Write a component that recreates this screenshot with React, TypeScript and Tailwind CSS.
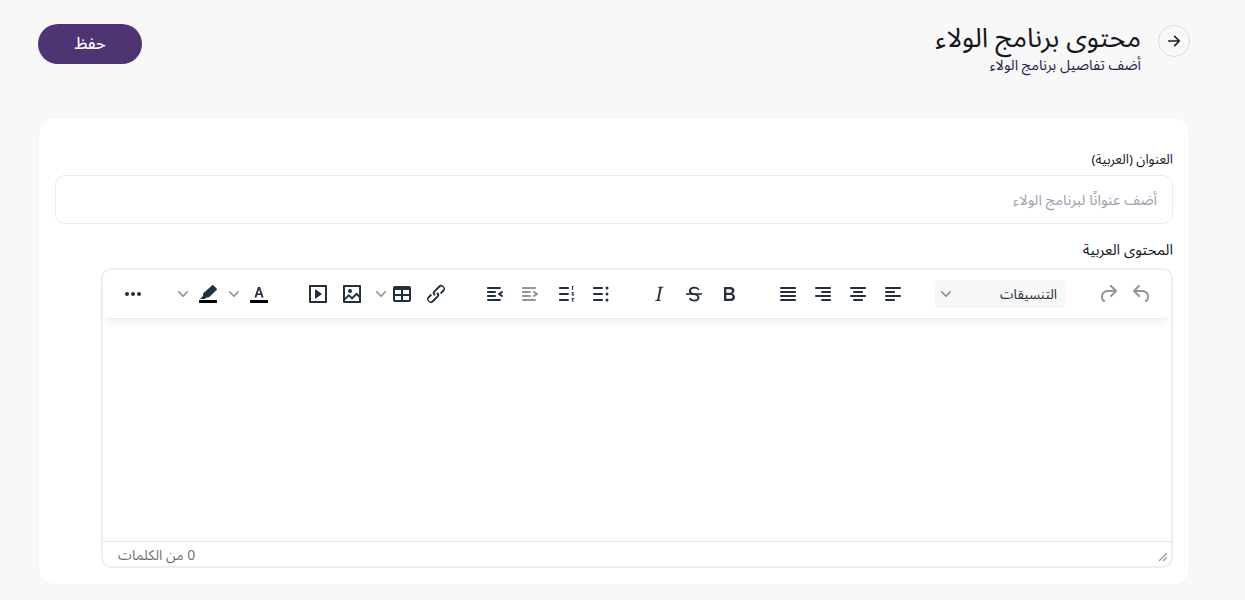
import React from "react";

const font = "font-['Noto_Sans_Arabic','DejaVu_Sans','Noto_Sans',sans-serif]";

function Ic({ d, className = "fill-[#222f3e]", flip = false, children }: { d?: string; className?: string; flip?: boolean; children?: React.ReactNode }) {
  return (
    <svg width="24" height="24" viewBox="0 0 24 24" className={className} fillRule="evenodd">
      <g transform={flip ? "translate(24 0) scale(-1 1)" : undefined}>
        {d && <path d={d} />}
        {children}
      </g>
    </svg>
  );
}

function Btn({ children }: { children: React.ReactNode }) {
  return <div className="w-[34px] h-[34px] flex items-center justify-center shrink-0">{children}</div>;
}

function Chev({ className = "" }: { className?: string }) {
  return (
    <div className={"w-[16px] h-[34px] flex items-center justify-center shrink-0 " + className}>
      <svg width="10" height="10" viewBox="0 0 10 10" className="fill-[#222f3e] opacity-50">
        <path d="M8.7 2.2c.3-.3.8-.3 1 0 .4.4.4.9 0 1.2L5.7 7.8c-.3.3-.9.3-1.2 0L.2 3.4a.8.8 0 0 1 0-1.2c.3-.3.8-.3 1.1 0L5 6l3.7-3.8Z" />
      </svg>
    </div>
  );
}

const P = {
  undo: "M6.4 8H12c3.7 0 6.2 2 6.8 5.1.6 2.7-.4 5.6-2.3 6.8a1 1 0 0 1-1-1.8c1.1-.6 1.8-2.7 1.4-4.6-.5-2.1-2.1-3.5-4.9-3.5H6.4l3.3 3.3a1 1 0 1 1-1.4 1.4l-5-5a1 1 0 0 1 0-1.4l5-5a1 1 0 0 1 1.4 1.4L6.4 8Z",
  redo: "M17.6 10H12c-2.8 0-4.4 1.4-4.9 3.5-.4 2 .3 4 1.4 4.6a1 1 0 1 1-1 1.8c-2-1.2-2.9-4.1-2.3-6.8.6-3 3-5.1 6.8-5.1h5.6l-3.3-3.3a1 1 0 1 1 1.4-1.4l5 5a1 1 0 0 1 0 1.4l-5 5a1 1 0 0 1-1.4-1.4l3.3-3.3Z",
  alignLeft: "M5 5h14c.6 0 1 .4 1 1s-.4 1-1 1H5a1 1 0 1 1 0-2Zm0 4h8c.6 0 1 .4 1 1s-.4 1-1 1H5a1 1 0 1 1 0-2Zm0 8h8c.6 0 1 .4 1 1s-.4 1-1 1H5a1 1 0 0 1 0-2Zm0-4h14c.6 0 1 .4 1 1s-.4 1-1 1H5a1 1 0 0 1 0-2Z",
  alignCenter: "M5 5h14c.6 0 1 .4 1 1s-.4 1-1 1H5a1 1 0 1 1 0-2Zm3 4h8c.6 0 1 .4 1 1s-.4 1-1 1H8a1 1 0 1 1 0-2Zm0 8h8c.6 0 1 .4 1 1s-.4 1-1 1H8a1 1 0 0 1 0-2Zm-3-4h14c.6 0 1 .4 1 1s-.4 1-1 1H5a1 1 0 0 1 0-2Z",
  alignRight: "M5 5h14c.6 0 1 .4 1 1s-.4 1-1 1H5a1 1 0 1 1 0-2Zm6 4h8c.6 0 1 .4 1 1s-.4 1-1 1h-8a1 1 0 0 1 0-2Zm0 8h8c.6 0 1 .4 1 1s-.4 1-1 1h-8a1 1 0 0 1 0-2Zm-6-4h14c.6 0 1 .4 1 1s-.4 1-1 1H5a1 1 0 0 1 0-2Z",
  justify: "M5 5h14c.6 0 1 .4 1 1s-.4 1-1 1H5a1 1 0 1 1 0-2Zm0 4h14c.6 0 1 .4 1 1s-.4 1-1 1H5a1 1 0 1 1 0-2Zm0 4h14c.6 0 1 .4 1 1s-.4 1-1 1H5a1 1 0 0 1 0-2Zm0 4h14c.6 0 1 .4 1 1s-.4 1-1 1H5a1 1 0 0 1 0-2Z",
  bold: "M7.8 19c-.3 0-.5 0-.6-.2l-.2-.5V5.7c0-.2 0-.4.2-.5l.6-.2h5c1.5 0 2.7.3 3.5 1 .7.6 1.1 1.4 1.1 2.5a3 3 0 0 1-.6 1.9c-.4.6-1 1-1.6 1.2.4.1.9.3 1.3.6s.8.7 1 1.2c.4.4.5 1 .5 1.6 0 1.3-.4 2.3-1.3 3-.8.7-2.1 1-3.8 1H7.8Zm5-8.3c.6 0 1.2-.1 1.6-.5.4-.3.6-.7.6-1.3 0-1.1-.8-1.7-2.3-1.7H9.3v3.5h3.4Zm.5 6c.7 0 1.3-.1 1.7-.4.4-.4.6-.9.6-1.5s-.2-1-.7-1.4c-.4-.3-1-.4-2-.4H9.4v3.8h4Z",
  italic: "m16.7 4.7-.1.9h-.3c-.6 0-1 0-1.4.3-.3.3-.4.6-.5 1.1l-2.1 9.8v.6c0 .5.4.8 1.4.8h.2l-.2.8H8l.2-.8h.2c1.1 0 1.8-.5 2-1.5l2-9.8.1-.5c0-.6-.4-.8-1.4-.8h-.3l.2-.9h5.8Z",
  strikeS: "M16.4 8.6c-.3-.5-.7-1-1.2-1.3-.8-.6-1.7-.9-2.9-.9-2.2 0-3.4 1-3.4 2.4 0 1.7 1.7 2.2 3.6 2.6 2.9.6 5 1.6 5 4.2 0 2.5-2.2 4-5.3 4-2.4 0-4.3-1-5.4-2.8l1.6-1c.8 1.3 2.1 2 3.8 2 2 0 3.3-.8 3.3-2.2 0-1.6-1.7-2.1-3.7-2.5-2.7-.6-4.9-1.5-4.9-4.2 0-2.4 2.1-4.2 5.3-4.2 2.6 0 4.3 1.1 5.4 2.9l-1.7 1Z",
  bullets: "M11 5h8c.6 0 1 .4 1 1s-.4 1-1 1h-8a1 1 0 0 1 0-2Zm0 6h8c.6 0 1 .4 1 1s-.4 1-1 1h-8a1 1 0 0 1 0-2Zm0 6h8c.6 0 1 .4 1 1s-.4 1-1 1h-8a1 1 0 0 1 0-2ZM6 4.5a1.5 1.5 0 1 1 0 3 1.5 1.5 0 0 1 0-3Zm0 6a1.5 1.5 0 1 1 0 3 1.5 1.5 0 0 1 0-3Zm0 6a1.5 1.5 0 1 1 0 3 1.5 1.5 0 0 1 0-3Z",
  indent: "M7 5h12c.6 0 1 .4 1 1s-.4 1-1 1H7a1 1 0 1 1 0-2Zm5 4h7c.6 0 1 .4 1 1s-.4 1-1 1h-7a1 1 0 0 1 0-2Zm0 4h7c.6 0 1 .4 1 1s-.4 1-1 1h-7a1 1 0 0 1 0-2Zm-5 4h12a1 1 0 0 1 0 2H7a1 1 0 0 1 0-2Zm-2.6-3.8L6.2 12l-1.8-1.2a1 1 0 0 1 1.2-1.6l3 2a1 1 0 0 1 0 1.6l-3 2a1 1 0 1 1-1.2-1.6Z",
  outdent: "M7 5h12c.6 0 1 .4 1 1s-.4 1-1 1H7a1 1 0 1 1 0-2Zm5 4h7c.6 0 1 .4 1 1s-.4 1-1 1h-7a1 1 0 0 1 0-2Zm0 4h7c.6 0 1 .4 1 1s-.4 1-1 1h-7a1 1 0 0 1 0-2Zm-5 4h12a1 1 0 0 1 0 2H7a1 1 0 0 1 0-2Zm1.6-3.8a1 1 0 0 1-1.2 1.6l-3-2a1 1 0 0 1 0-1.6l3-2a1 1 0 0 1 1.2 1.6L6.8 12l1.8 1.2Z",
  link: "M6.2 12.3a1 1 0 0 1 1.4 1.4l-2 2a2 2 0 1 0 2.6 2.8l4.8-4.8a1 1 0 0 0 0-1.4 1 1 0 1 1 1.4-1.3 2.9 2.9 0 0 1 0 4L9.6 20a3.9 3.9 0 0 1-5.5-5.5l2-2Zm11.6-.6a1 1 0 0 1-1.4-1.4l2-2a2 2 0 1 0-2.6-2.8L11 10.3a1 1 0 0 0 0 1.4A1 1 0 1 1 9.6 13a2.9 2.9 0 0 1 0-4L14.4 4a3.9 3.9 0 0 1 5.5 5.5l-2 2Z",
  table: "M19 4a2 2 0 0 1 2 2v12a2 2 0 0 1-2 2H5a2 2 0 0 1-2-2V6c0-1.1.9-2 2-2h14Zm0 10h-6v4h6v-4Zm-8 0H5v4h6v-4Zm8-6h-6v4h6V8Zm-8 0H5v4h6V8Z",
  image: "M5 15.7l3.3-3.2c.3-.3.7-.3 1 0L12 15l4.1-4c.3-.4.8-.4 1 0l2 1.9V5H5v10.7ZM5 18.3V19h14v-3.3l-2.4-2.4-4.1 4c-.3.3-.8.3-1 0L8.9 14.6 5 18.3ZM4 3h16c.6 0 1 .4 1 1v16c0 .6-.4 1-1 1H4a1 1 0 0 1-1-1V4c0-.6.4-1 1-1Zm6 8a2 2 0 1 1 0-4 2 2 0 0 1 0 4Z",
  media: "M4 3h16c.6 0 1 .4 1 1v16c0 .6-.4 1-1 1H4a1 1 0 0 1-1-1V4c0-.6.4-1 1-1Zm1 2v14h14V5H5Zm4.8 2.6 5.6 4a.5.5 0 0 1 0 .8l-5.6 4A.5.5 0 0 1 9 16V8a.5.5 0 0 1 .8-.4Z",
  more: "M6 10a2 2 0 0 0-2 2c0 1.1.9 2 2 2a2 2 0 0 0 2-2 2 2 0 0 0-2-2Zm12 0a2 2 0 0 0-2 2c0 1.1.9 2 2 2a2 2 0 0 0 2-2 2 2 0 0 0-2-2Zm-6 0a2 2 0 0 0-2 2c0 1.1.9 2 2 2a2 2 0 0 0 2-2 2 2 0 0 0-2-2Z",
  letterA: "M9.4 15.5H7.4L11 5h2l3.6 10.5h-2l-.8-2.5h-3.6l-.8 2.5Zm1.3-4.1h2.6L12 7.3l-1.3 4.1Z",
  pen: "M17.3 3.2l3.5 3.5c.3.3.3.8 0 1.1l-7.8 7.5-2.2.3c-.4 0-.7.2-1 .5l-1 .9H4l2.6-2.7c.2-.2.4-.6.4-.9l.3-2.2 8.9-8c.3-.3.8-.3 1.1 0Z",
};

export default function App() {
  return (
    <div dir="rtl" className={"min-h-[600px] bg-[#f8f8f8] pl-[38px] pr-[55px] pt-[24px] " + font}>
      <header className="flex justify-between h-[93px]">
        <div className="flex gap-[17px] pt-[1px]">
          <div className="w-[32px] h-[32px] rounded-full border border-[#dcdcdc] flex items-center justify-center text-[#1e1e2e]">
            <svg width="16" height="16" viewBox="0 0 24 24" fill="none" stroke="currentColor" strokeWidth="2.4" strokeLinecap="round" strokeLinejoin="round">
              <path d="M4 12h16M13 5l7 7-7 7" />
            </svg>
          </div>
          <div>
            <h1 className="text-[27px] leading-[28px] text-[#16161f] whitespace-nowrap">محتوى برنامج الولاء</h1>
            <p className="text-[14.5px] leading-[18px] mt-[4px] text-[#2e1a4d] whitespace-nowrap">أضف تفاصيل برنامج الولاء</p>
          </div>
        </div>
        <button className="w-[104px] h-[40px] rounded-full bg-[#4e3473] text-white text-[16px] font-medium">حفظ</button>
      </header>

      <main className="h-[468px] bg-white border border-[#f4f4f4] rounded-[16px] px-[16px] pt-[33px]">
        <label className="block text-[13.3px] leading-[18px] text-[#16161f]">العنوان (العربية)</label>
        <div className="mt-[6px] h-[49px] border border-[#ebebeb] rounded-[10px] flex items-center px-[15px] pt-[3px] text-[14.7px] text-[#9ca3af]">
          أضف عنوانًا لبرنامج الولاء
        </div>
        <label className="block mt-[17px] text-[14.8px] leading-[20px] text-[#16161f]">المحتوى العربية</label>
        <div className="mt-[7px] ml-[46px] h-[300px] border-2 border-[#eeeeee] rounded-[10px] flex flex-col">
          <div className="h-[48px] shrink-0 flex items-center pr-[12px] rounded-t-[8px] shadow-[0_2px_2px_-2px_rgba(34,47,62,0.1),0_8px_8px_-4px_rgba(34,47,62,0.07)] relative bg-white">
            <div className="flex">
              <Btn><Ic d={P.undo} className="fill-[#222f3e] opacity-50" /></Btn>
              <Btn><Ic d={P.redo} className="fill-[#222f3e] opacity-50" /></Btn>
            </div>
            <div className="mr-[26px] w-[130px] h-[28px] bg-[#f7f7f7] rounded-[3px] flex items-center justify-between pr-[8px] pl-[6px] text-[13.5px] text-[#222f3e]">
              <span className="pt-[2px]">التنسيقات</span>
              <svg width="10" height="10" viewBox="0 0 10 10" className="fill-[#222f3e] opacity-50">
                <path d="M8.7 2.2c.3-.3.8-.3 1 0 .4.4.4.9 0 1.2L5.7 7.8c-.3.3-.9.3-1.2 0L.2 3.4a.8.8 0 0 1 0-1.2c.3-.3.8-.3 1.1 0L5 6l3.7-3.8Z" />
              </svg>
            </div>
            <div className="mr-[25px] flex gap-[1px]">
              <Btn><Ic d={P.alignLeft} /></Btn>
              <Btn><Ic d={P.alignCenter} /></Btn>
              <Btn><Ic d={P.alignRight} /></Btn>
              <Btn><Ic d={P.justify} /></Btn>
            </div>
            <div className="mr-[25px] flex gap-[1px]">
              <Btn><Ic d={P.bold} /></Btn>
              <Btn>
                <Ic>
                  <path d={P.strikeS} />
                  <path d="M4 11.2h16v1.6H4z" />
                </Ic>
              </Btn>
              <Btn><Ic d={P.italic} /></Btn>
            </div>
            <div className="mr-[24px] flex">
              <Btn><Ic d={P.bullets} flip /></Btn>
              <Btn>
                <Ic flip>
                  <path d="M11 5h8c.6 0 1 .4 1 1s-.4 1-1 1h-8a1 1 0 0 1 0-2Zm0 6h8c.6 0 1 .4 1 1s-.4 1-1 1h-8a1 1 0 0 1 0-2Zm0 6h8c.6 0 1 .4 1 1s-.4 1-1 1h-8a1 1 0 0 1 0-2Z" />
                  <path d="M6 4h1v4H6V5H5l1-1ZM4.8 10.2h2.6v1.4l-1.3 1h1.3v.8H4.8v-.9l1.6-1.4H4.8v-.9ZM4.8 16h2.6v.8l-.8.7c.5 0 .8.4.8.9 0 .7-.5 1.1-1.3 1.1H4.8v-.8h1.3c.3 0 .4-.1.4-.3s-.1-.3-.4-.3h-.6v-.7l.7-.6H4.8V16Z" />
                </Ic>
              </Btn>
            </div>
            <div className="mr-[3px] flex gap-[1px]">
              <Btn><Ic d={P.outdent} flip className="fill-[#222f3e] opacity-50" /></Btn>
              <Btn><Ic d={P.indent} flip /></Btn>
            </div>
            <div className="mr-[25px] flex items-center">
              <Btn><Ic d={P.link} /></Btn>
              <Btn><Ic d={P.table} /></Btn>
              <Chev className="-mr-[4px]" />
              <div className="mr-[4px] flex">
                <Btn><Ic d={P.image} /></Btn>
                <Btn><Ic d={P.media} /></Btn>
              </div>
            </div>
            <div className="mr-[25px] flex items-center">
              <Btn>
                <Ic>
                  <path d={P.letterA} />
                  <path d="M3 18h18v3H3z" className="fill-black" />
                </Ic>
              </Btn>
              <Chev />
              <div className="mr-[1px]">
                <Btn>
                  <Ic>
                    <path d={P.pen} />
                    <path d="M3 18h18v3H3z" className="fill-black" />
                  </Ic>
                </Btn>
              </div>
              <Chev />
            </div>
            <div className="mr-[25px]">
              <Btn><Ic d={P.more} /></Btn>
            </div>
          </div>
          <div className="flex-1 bg-white" />
          <div dir="ltr" className="h-[25px] shrink-0 border-t border-[#e3e3e3] flex items-center justify-between pl-[15px] pr-[3px] text-[14px] leading-[20px] text-[#222f3e]/70 pt-[4px]">
            <span dir="rtl">0 من الكلمات</span>
            <svg width="10" height="10" viewBox="0 0 10 10" className="fill-[#222f3e] opacity-50 mt-[2px]">
              <path d="M8.1 1.1A.5.5 0 1 1 8.9 2l-7 7A.5.5 0 1 1 1 8.1l7-7ZM8.1 5.1A.5.5 0 1 1 8.9 6l-3 3A.5.5 0 1 1 5 8.1l3-3Z" />
            </svg>
          </div>
        </div>
      </main>
    </div>
  );
}
